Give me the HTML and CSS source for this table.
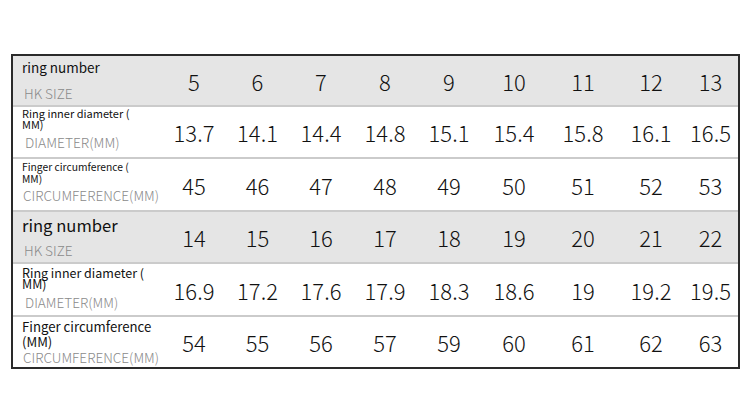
FILE: index.html
```html
<!DOCTYPE html>
<html>
<head>
<meta charset="utf-8">
<link rel="stylesheet" href="styles.css">
</head>
<body>
<div class="page">
  <div class="chart">
    <div class="row head r1">
      <div class="label">
        <div class="t t1">ring number</div>
        <div class="sub s1">HK SIZE</div>
      </div>
      <div class="num">5</div><div class="num">6</div><div class="num">7</div><div class="num">8</div><div class="num">9</div><div class="num">10</div><div class="num">11</div><div class="num">12</div><div class="num">13</div>
    </div>
    <div class="row r2">
      <div class="label">
        <div class="t t2"><div class="ln">Ring inner diameter (</div><div class="ln">MM)</div></div>
        <div class="sub s2">DIAMETER(MM)</div>
      </div>
      <div class="num">13.7</div><div class="num">14.1</div><div class="num">14.4</div><div class="num">14.8</div><div class="num">15.1</div><div class="num">15.4</div><div class="num">15.8</div><div class="num">16.1</div><div class="num">16.5</div>
    </div>
    <div class="row r3">
      <div class="label">
        <div class="t t3"><div class="ln">Finger circumference (</div><div class="ln">MM)</div></div>
        <div class="sub s3">CIRCUMFERENCE(MM)</div>
      </div>
      <div class="num">45</div><div class="num">46</div><div class="num">47</div><div class="num">48</div><div class="num">49</div><div class="num">50</div><div class="num">51</div><div class="num">52</div><div class="num">53</div>
    </div>
    <div class="row head r4">
      <div class="label">
        <div class="t t4">ring number</div>
        <div class="sub s4">HK SIZE</div>
      </div>
      <div class="num">14</div><div class="num">15</div><div class="num">16</div><div class="num">17</div><div class="num">18</div><div class="num">19</div><div class="num">20</div><div class="num">21</div><div class="num">22</div>
    </div>
    <div class="row r5">
      <div class="label">
        <div class="t t5"><div class="ln">Ring inner diameter (</div><div class="ln">MM)</div></div>
        <div class="sub s5">DIAMETER(MM)</div>
      </div>
      <div class="num">16.9</div><div class="num">17.2</div><div class="num">17.6</div><div class="num">17.9</div><div class="num">18.3</div><div class="num">18.6</div><div class="num">19</div><div class="num">19.2</div><div class="num">19.5</div>
    </div>
    <div class="row r6">
      <div class="label">
        <div class="t t6"><div class="ln">Finger circumference</div><div class="ln">(MM)</div></div>
        <div class="sub s6">CIRCUMFERENCE(MM)</div>
      </div>
      <div class="num">54</div><div class="num">55</div><div class="num">56</div><div class="num">57</div><div class="num">59</div><div class="num">60</div><div class="num">61</div><div class="num">62</div><div class="num">63</div>
    </div>
  </div>
</div>
</body>
</html>
```

FILE: styles.css
```css
html, body {
  margin: 0;
  padding: 0;
  background: #ffffff;
}

body {
  font-family: "Noto Sans CJK SC", "Noto Sans", sans-serif;
  font-weight: 300;
  color: #111111;
}

.page {
  padding: 54px 0 0 11px;
}

.chart {
  width: 729px;
  box-sizing: border-box;
  border: 2px solid #2a2a2a;
  background: #ffffff;
}

.row {
  display: grid;
  grid-template-columns: 149px 64px 63px 64px 64px 64px 66px 72px 64px 55px;
  box-sizing: border-box;
  border-bottom: 2px solid #cbcbcb;
}

.row.head {
  background: #e5e5e5;
}

.r1 { height: 51px; }
.r2 { height: 52px; }
.r3 { height: 53px; }
.r4 { height: 52px; }
.r5 { height: 53px; }
.r6 { height: 50px; border-bottom: none; }

.label {
  padding-left: 9px;
  white-space: nowrap;
}

.t {
  color: #111111;
  font-weight: 400;
}

.sub {
  color: #8a8a8a;
  font-size: 13.6px;
  line-height: 1;
}

.t1 { font-size: 13.5px; line-height: 1; padding-top: 5px; }
.s1 { margin-top: 12px; padding-left: 2px; }

.t2 { font-size: 11px; padding-top: 1px; }
.t2 .ln { height: 11px; line-height: 11px; }
.s2 { margin-top: 6px; padding-left: 3px; font-size: 13.8px; }

.t3 { font-size: 10.3px; padding-top: 2px; }
.t3 .ln { height: 11.5px; line-height: 11.5px; }
.s3 { margin-top: 5px; padding-left: 1px; }

.t4 { font-size: 16.6px; line-height: 1; padding-top: 5px; }
.s4 { margin-top: 10px; padding-left: 2px; }

.t5 { font-size: 12.5px; padding-top: 3px; }
.t5 .ln { height: 11px; line-height: 11px; }
.s5 { margin-top: 7px; padding-left: 3px; }

.t6 { font-size: 13.2px; padding-top: 2px; }
.t6 .ln { height: 15px; line-height: 15px; }
.s6 { margin-top: 2px; padding-left: 1px; }

.num {
  display: flex;
  align-items: center;
  justify-content: center;
  font-size: 22px;
  color: #111111;
}
```
